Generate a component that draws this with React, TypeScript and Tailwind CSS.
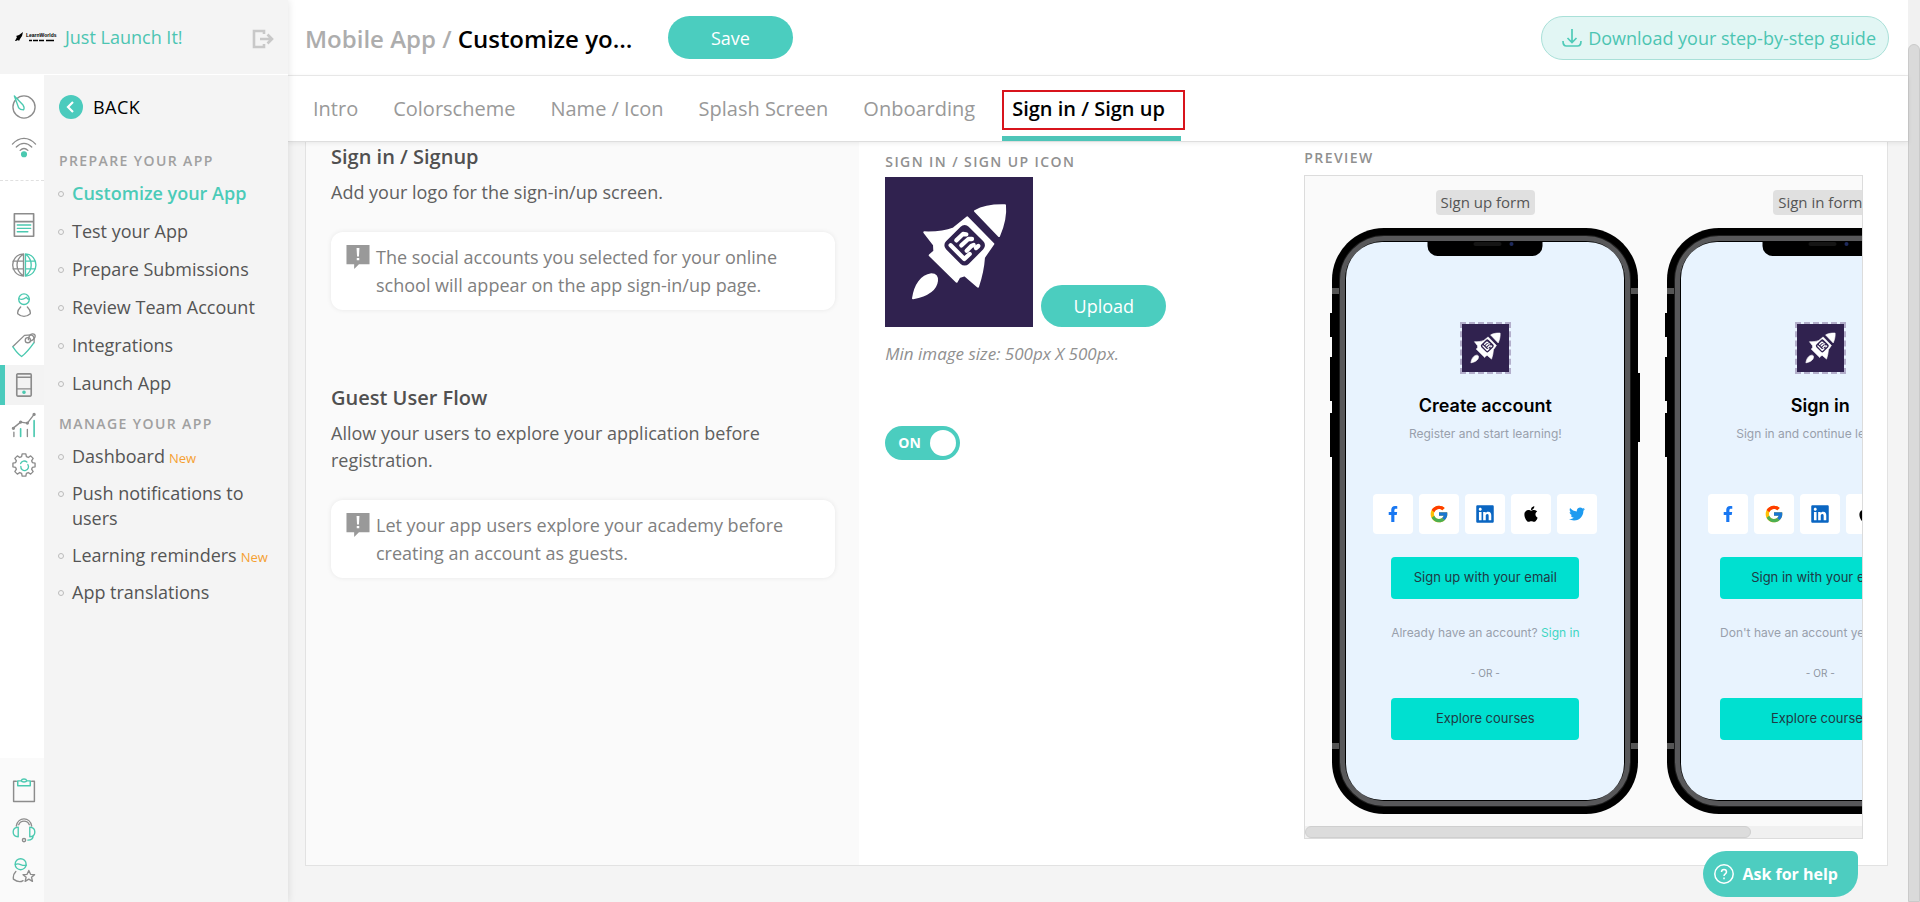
import React, { useState } from 'react';
import { FaApple, FaFacebookF, FaLinkedin, FaTwitter } from 'react-icons/fa';
import { FcGoogle } from 'react-icons/fc';

const prepareLinks = ['Customize your App', 'Test your App', 'Prepare Submissions', 'Review Team Account', 'Integrations', 'Launch App'];

const manageLinks = [
  { label: 'Dashboard', isNew: true },
  { label: 'Push notifications to users', isNew: false },
  { label: 'Learning reminders', isNew: true },
  { label: 'App translations', isNew: false }
];

const tabs = ['Intro', 'Colorscheme', 'Name / Icon', 'Splash Screen', 'Onboarding', 'Sign in / Sign up'];

const socials = [
  { name: 'Facebook', icon: FaFacebookF, className: 'w-4 h-4 text-[#1877f2]' },
  { name: 'Google', icon: FcGoogle, className: 'w-5 h-5' },
  { name: 'LinkedIn', icon: FaLinkedin, className: 'w-5 h-5 text-[#0a66c2]' },
  { name: 'Apple', icon: FaApple, className: 'w-[18px] h-[18px] text-black' },
  { name: 'Twitter', icon: FaTwitter, className: 'w-4 h-4 text-[#1d9bf0]' }
];

const G = '#8c8c8c';
const T = '#4bc9b0';

const railIcons = [
  {
    name: 'Get started',
    art: (
      <>
        <circle cx="12.5" cy="12.5" r="11.5" stroke={G} />
        <path d="M2.500 1l9 9.500c1 1.500 1.500 3.500.5 5-2.500 0-4-.5-5-2z" stroke={T} fill="#fff" />
      </>
    )
  },
  {
    name: 'Feed',
    art: (
      <>
        <path d="M.5 9.500c7-8 17-8 24 0M4.500 12.500c5-5 11-5 16 0M8.500 16c2.500-2.500 5.500-2.500 8 0" stroke={G} />
        <circle cx="12.500" cy="20" r="2.500" fill={T} stroke={T} />
      </>
    )
  },
  {
    name: 'Website',
    art: (
      <>
        <path d="M2.500.8h20v23.400h-20zM2.500 9h20" stroke={G} strokeWidth="1.700" />
        <path d="M5.500 12.500h14M5.500 16h14M5.500 19.500h11" stroke={T} />
      </>
    )
  },
  {
    name: 'Courses',
    art: (
      <>
        <path d="M12 1v23M12 1C-3 2-3 23 12 24M12 1C3 7 3 18 12 24M1 8.500h11M1 16.500h11" stroke={G} />
        <path d="M14 1v23M14 1c14.500 1 14.500 22 0 23M14 1c8 6 8 17 0 23M14 8.500h10M14 16.500h10" stroke={T} />
      </>
    )
  },
  {
    name: 'Users',
    art: (
      <>
        <circle cx="12.500" cy="6.500" r="5.500" stroke={T} />
        <path d="M7.500 6c4 2 6-.5 7.500-1.500 1 1.500 2 2 3 2" stroke={T} />
        <path d="M9 14.500c-2 2-3.500 4.500-3 7 4 3.500 9 3.500 13 0 .5-2.500-1-5-3-7" stroke={G} />
      </>
    )
  },
  {
    name: 'Sales',
    art: (
      <>
        <path d="M1 14L13 2.500 20 2c2.500.5 3.500 3 3 8" stroke={G} />
        <circle cx="16.500" cy="7.500" r="2.700" stroke={G} />
        <path d="M17 7c1-8 8-7 7-3-1 3-3 4-5 4.500" stroke={G} />
        <path d="M1 14.500c3 4.500 6 8 9 10 5-4 9-9 12.500-14" stroke={T} />
      </>
    )
  },
  {
    name: 'Mobile app',
    art: (
      <>
        <rect x="5" y="1" width="15" height="23" rx="1" stroke={G} strokeWidth="1.700" />
        <path d="M5 4.500h15M5 16.500h15" stroke={G} />
        <circle cx="12.500" cy="20" r="1.200" fill={T} stroke={T} />
      </>
    )
  },
  {
    name: 'Reports',
    art: (
      <>
        <path d="M1 16l8-6.500 7 1L23 1.500M2 20v4.500M16 17v7.500" stroke={G} />
        <path d="M9 16.500v8M23 8v16.500" stroke={T} strokeWidth="1.700" />
        <g fill={G} stroke={G}>
          <circle cx="1.500" cy="16" r="1" />
          <circle cx="9" cy="9.500" r="1" />
          <circle cx="16" cy="10.500" r="1" />
          <circle cx="23" cy="1.500" r="1" />
        </g>
      </>
    )
  },
  {
    name: 'Settings',
    art: (
      <>
        <path
          d="M10.600 1h3.800l.6 2.900 1.900.8L19.400 3l2.600 2.600-1.600 2.500.8 1.900 2.800.6v3.800l-2.800.6-.8 1.900 1.600 2.500-2.600 2.600-2.500-1.700-1.900.8-.6 2.900h-3.800l-.6-2.900-1.900-.8L5.600 22 3 19.400l1.600-2.500-.8-1.900-2.800-.6v-3.800l2.800-.6.8-1.900L3 5.600 5.600 3l2.500 1.700 1.900-.8z"
          stroke={G}
        />
        <path d="M9 11a4 4 0 0 1 6.500-1.500M16.500 12a4 4 0 1 1-7.300 2" stroke={T} />
      </>
    )
  }
];

const footerIcons = [
  {
    name: 'Tasks',
    art: (
      <>
        <path d="M4.500 3.500H1.700v21h21.600v-21h-2.800" stroke={G} strokeWidth="1.500" />
        <path d="M6 3h3.500c1-2.500 5-2.500 6 0H19v5H6zM9.500 3c1 1.500 5 1.500 6 0" stroke={T} strokeWidth="1.500" />
      </>
    )
  },
  {
    name: 'Support',
    art: (
      <>
        <path d="M4.500 8.500C6-1.500 19-1.500 20.500 8.500M7 7c2-5 9-5 11 0" stroke={G} />
        <path d="M6.500 9.500v10C-.5 19-.5 10 6.500 9.500zM18.500 9.500v10c7-.5 7-9.500 0-10zM22 18.500c0 3-2 4.500-5.500 4.500" stroke={T} />
        <circle cx="12.500" cy="23" r="1.700" stroke={G} />
      </>
    )
  },
  {
    name: 'Experts',
    art: (
      <>
        <circle cx="9" cy="6.500" r="5.700" stroke={T} />
        <path d="M3.500 7c4-3 6 2 11.500.5" stroke={T} />
        <path d="M4 14c-2 2-3 4.500-2.500 8 4 3 7 3.500 10 1.500" stroke={G} />
        <path d="M17.500 13l1.800 4 4.200.3-3.200 2.700 1 4.300-3.800-2.300-3.800 2.300 1-4.300-3.200-2.700 4.200-.3z" stroke={G} />
      </>
    )
  }
];

function RocketLogo({ className }: { className: string }) {
  return (
    <svg viewBox="0 0 444 450" preserveAspectRatio="none" className={className} role="img" aria-label="School logo">
      <rect width="444" height="450" fill="#30224f" />
      <g fill="#fff" stroke="#fff" strokeWidth="6" strokeLinejoin="round">
        <path d="M270 102c25-14 55-18 90-17 3 30-5 62-18 92z" />
        <path d="M247 121l78 80-28 40c-2 30-8 58-18 88l-40-34-16 5-8 14-81-79 14-12-1-19-29-38c30 1 60-1 88-12z" />
        <path d="M84 364c6-40 25-68 55-72 14 0 18 8 17 20-3 26-30 44-72 52z" />
      </g>
      <rect x="191" y="157" width="96" height="96" rx="17" transform="rotate(45 239 205)" fill="#30224f" />
      <g stroke="#fff" strokeWidth="13" strokeLinecap="round" strokeLinejoin="round" fill="none">
        <path d="M197 205l41 41 16-15" />
        <path d="M214 190l20-19 10 1" />
        <path d="M229 205l21-19 11 0" />
        <path d="M245 221l14-14 7-3" />
        <path d="M273 213l7-6" />
      </g>
    </svg>
  );
}

function RailButton({ name, art, active }: { name: string; art: React.ReactNode; active?: boolean }) {
  return (
    <button
      type="button"
      aria-label={name}
      className={
        active
          ? 'flex h-10 w-11 items-center justify-center border-l-[5px] border-[#4bcbbd] bg-[#f3f3f3] pr-[1px]'
          : 'flex h-10 w-11 items-center justify-center pl-1'
      }
    >
      <svg viewBox="-1 -1 27 27" className="h-[26px] w-[26px]" fill="none" strokeWidth="1.400" strokeLinecap="round" strokeLinejoin="round">
        {art}
      </svg>
    </button>
  );
}

function Note({ children }: { children: React.ReactNode }) {
  return (
    <div className="flex gap-[6px] rounded-xl bg-white py-[11px] pr-8 pl-[15px] shadow-[0_0_5px_rgba(0,0,0,0.08)]">
      <svg viewBox="0 0 24 25" className="mt-0.5 h-6 w-6 shrink-0" aria-hidden="true">
        <path d="M0 0h24v20H13l-5 5v-5H0z" fill="#999" />
        <path d="M10.500 3h3l-.5 9h-2zM10.700 13.500h2.600V16h-2.600z" fill="#fff" />
      </svg>
      <p className="text-lg leading-7 text-[#808080]">{children}</p>
    </div>
  );
}

interface PhoneProps {
  badge: string;
  title: string;
  subtitle: string;
  action: string;
  question: string;
  link: string;
}

function Phone({ badge, title, subtitle, action, question, link }: PhoneProps) {
  return (
    <div className="flex shrink-0 flex-col items-center">
      <span className="mb-[13px] rounded-sm bg-[#e0e0e0] px-[5px] text-[15px] leading-[25px] text-[#555]">{badge}</span>
      <div className="relative h-[586px] w-[306px] rounded-[52px] bg-black p-2">
        {/* side keys and antenna lines */}
        <div className="absolute top-[85px] -left-0.5 h-6 w-2 bg-black" />
        <div className="absolute top-[129px] -left-0.5 h-11 w-2 bg-black" />
        <div className="absolute top-[185px] -left-0.5 h-11 w-2 bg-black" />
        <div className="absolute top-[145px] -right-0.5 h-[69px] w-2 bg-black" />
        <div className="absolute inset-x-0 top-[60px] h-[6px] bg-[#555]" />
        <div className="absolute inset-x-0 bottom-[65px] h-[6px] bg-[#555]" />
        <div className="relative h-full rounded-[44px] border-[5px] border-[#58585a] bg-black p-[1px] shadow-[0_0_0_1px_#1c1c1c]">
          <div className="relative flex h-full flex-col items-center overflow-hidden rounded-[36px] bg-[#e8f3fe] pt-20 font-['Inter',sans-serif]">
            <div className="absolute top-0 left-1/2 flex h-[14px] w-[115px] -translate-x-1/2 items-start justify-center gap-2 rounded-b-[10px] bg-black">
              <span className="ml-4 h-1 w-7 rounded-full bg-[#151515]" />
              <span className="h-1 w-1 rounded-full bg-[#1e2a5c]" />
            </div>
            <div className="border-2 border-dashed border-[#b3aecb]">
              <RocketLogo className="h-12 w-[47px]" />
            </div>
            <h3 className="mt-5 text-lg leading-6 font-semibold text-black">{title}</h3>
            <p className="mt-2 text-xs leading-4 text-[#98a0ac]">{subtitle}</p>
            <div className="mt-[52px] flex gap-1.5">
              {socials.map(social => (
                <button key={social.name} type="button" aria-label={social.name} className="flex h-10 w-10 items-center justify-center rounded-sm bg-white">
                  <social.icon className={social.className} />
                </button>
              ))}
            </div>
            <div className="mt-[23px] flex flex-col text-center">
              <button type="button" className="h-[42px] rounded bg-[#00e0d0] text-[13px] text-[#1f3a44]">{action}</button>
              <p className="mt-[26px] text-xs leading-4 text-[#98a0ac]">
                {question} <a href="#auth" className="text-[#3fd6c2]">{link}</a>
              </p>
              <p className="mt-6 text-[10px] leading-4 text-[#8d95a1]">- OR -</p>
              <button type="button" className="mt-[17px] h-[42px] rounded bg-[#00e0d0] text-[13px] text-[#1f3a44]">Explore courses</button>
            </div>
          </div>
        </div>
      </div>
    </div>
  );
}

export default function App() {
  const [guestFlow, setGuestFlow] = useState(true);

  return (
    <div className="flex h-screen overflow-hidden bg-[#f4f4f4] font-['Open_Sans','Noto_Sans',sans-serif]">
      {/* Sidebar */}
      <aside className="z-10 flex w-72 shrink-0 flex-col bg-[#f4f4f4] shadow-[0_0_8px_rgba(0,0,0,0.12)]">
        <div className="flex h-[75px] items-center border-b border-white pr-[14px] pl-[15px]">
          <svg viewBox="0 0 46 12" className="mr-1 h-3 w-[46px]" aria-hidden="true">
            <path d="M0 10l2-4-1-1 3-1 4-3-1 4-2 3-1 2-1-1-2 1z" fill="#000" />
            <text x="11" y="6" fontSize="5" fontWeight="700" fontFamily="Liberation Sans, sans-serif" fill="#000">LearnWorlds</text>
            <path d="M14 9.500h3m1 0h5m1 0h5m2 0h8" stroke="#000" strokeWidth="1.500" />
          </svg>
          <a href="#school" className="text-lg text-[#4cc5b2]">Just Launch It!</a>
          <button type="button" aria-label="Log out" className="ml-auto pt-1">
            <svg viewBox="0 0 22 20" className="h-5 w-[22px]" fill="none" stroke="#c8c8c8" strokeWidth="2.600">
              <path d="M12 5V2H2v16h10v-3M8 10h12M15.500 5.500L20 10l-4.500 4.500" />
            </svg>
          </button>
        </div>
        <div className="flex min-h-0 flex-1">
          <nav aria-label="Main" className="flex w-11 shrink-0 flex-col bg-white pt-3">
            {railIcons.slice(0, 2).map(icon => (
              <RailButton key={icon.name} {...icon} />
            ))}
            <hr className="mt-[13px] mb-6 border-dashed border-[#e0e0e0]" />
            {railIcons.slice(2).map(icon => (
              <RailButton key={icon.name} {...icon} active={icon.name === 'Mobile app'} />
            ))}
            <div className="mt-auto bg-[#fafafa] py-3">
              {footerIcons.map(icon => (
                <RailButton key={icon.name} {...icon} />
              ))}
            </div>
          </nav>
          <nav aria-label="Mobile app" className="min-w-0 flex-1 pt-[19px] pr-4 pl-[15px]">
            <a href="#back" className="flex items-center gap-2.5 text-lg leading-[26px] font-medium tracking-wide text-black">
              <svg viewBox="0 0 24 24" className="h-6 w-6" aria-hidden="true">
                <circle cx="12" cy="12" r="12" fill="#4bcbbd" />
                <path d="M14 7l-5 5 5 5" fill="none" stroke="#fff" strokeWidth="2.200" />
              </svg>
              BACK
            </a>
            <h2 className="mt-[31px] text-sm leading-5 font-semibold tracking-widest text-[#a0a0a0] uppercase">Prepare your app</h2>
            <ul className="mt-[10px] space-y-[13px]">
              {prepareLinks.map((label, index) => (
                <li key={label} className="flex gap-2">
                  <span className="mt-2.5 -ml-[1px] h-[6px] w-[6px] shrink-0 rounded-full border border-[#bbb]" />
                  <a href="#page" className={index === 0 ? 'text-lg leading-[25px] font-semibold text-[#4bcbb8]' : 'text-lg leading-[25px] font-medium text-[#555]'}>
                    {label}
                  </a>
                </li>
              ))}
            </ul>
            <h2 className="mt-[18px] text-sm leading-5 font-semibold tracking-widest text-[#a0a0a0] uppercase">Manage your app</h2>
            <ul className="mt-[10px] space-y-3">
              {manageLinks.map(item => (
                <li key={item.label} className="flex gap-2">
                  <span className="mt-2.5 -ml-[1px] h-[6px] w-[6px] shrink-0 rounded-full border border-[#bbb]" />
                  <a href="#page" className="text-lg leading-[25px] font-medium text-[#555]">
                    {item.label}
                    {item.isNew && <span className="ml-1 text-[13px] leading-none font-normal text-[#f5a032]">New</span>}
                  </a>
                </li>
              ))}
            </ul>
          </nav>
        </div>
      </aside>

      <main className="flex min-w-0 flex-1 flex-col">
        <header className="flex h-[76px] shrink-0 items-center border-b border-[#ececec] bg-white pr-[19px] pl-[17px]">
          <h1 className="w-[332px] truncate pt-0.5 text-2xl font-semibold text-black">
            <span className="text-[#adadad]">Mobile App / </span>
            Customize your App
          </h1>
          <button type="button" className="ml-[31px] h-[43px] w-[125px] rounded-full bg-[#4bcdbf] text-lg text-white">Save</button>
          <button type="button" className="ml-auto flex h-11 items-center gap-1.5 rounded-full border border-[#a9e0d8] bg-[#e2f6f4] pr-3 pl-5 text-lg text-[#4cc5b2]">
            <svg viewBox="0 0 20 20" className="h-5 w-5" fill="none" stroke="#4fcbb8" strokeWidth="1.700">
              <path d="M10 1v13M5.500 10l4.500 4.500 4.500-4.500M1 13c0 3.500 1 5 3.500 5h11c2.500 0 3.500-1.500 3.500-5" />
            </svg>
            Download your step-by-step guide
          </button>
        </header>
        <nav aria-label="App settings" className="z-[5] flex h-[66px] shrink-0 items-stretch gap-[19px] border-b border-[#dedede] bg-white pl-[17px] shadow-[0_1px_5px_rgba(0,0,0,0.08)]">
          {tabs.map(tab => (
            <a
              key={tab}
              href="#tab"
              className={
                tab === 'Sign in / Sign up'
                  ? 'relative flex items-center border-b-[5px] border-[#4dc5b8] pt-1.5 pr-4 pl-2.5 text-xl font-semibold text-black'
                  : 'flex items-center border-b-[5px] border-transparent px-2 pt-1.5 text-xl text-[#999]'
              }
            >
              {tab}
              {tab === 'Sign in / Sign up' && <span className="absolute top-3.5 -right-1 left-0 h-10 border-2 border-[#d8141c]" />}
            </a>
          ))}
        </nav>

        {/* Settings card */}
        <div className="flex min-h-0 flex-1 pr-5 pb-9 pl-[17px]">
          <section className="flex flex-1 border border-t-0 border-[#e2e2e2] bg-white">
            <div className="w-[35%] shrink-0 bg-[#fafafa] pt-[3px] pr-6 pl-[25px]">
              <div className="h-[241px]">
                <h2 className="text-xl leading-6 font-semibold text-[#505050]">Sign in / Signup</h2>
                <p className="mt-2.5 mb-[26px] text-lg leading-[27px] text-[#606060]">Add your logo for the sign-in/up screen.</p>
                <Note>The social accounts you selected for your online school will appear on the app sign-in/up page.</Note>
              </div>
              <h2 className="text-xl leading-6 font-semibold text-[#505050]">Guest User Flow</h2>
              <p className="mt-2.5 mb-[26px] text-lg leading-[27px] text-[#606060]">Allow your users to explore your application before registration.</p>
              <Note>Let your app users explore your academy before creating an account as guests.</Note>
            </div>
            <div className="grid min-w-0 flex-1 grid-cols-7 pr-6 pl-[26px]">
              <div className="col-span-3 pt-2.5">
                <h3 className="text-sm leading-5 font-semibold tracking-widest text-[#909090] uppercase">Sign in / Sign up icon</h3>
                <div className="mt-[5px] flex items-end gap-2">
                  <RocketLogo className="h-[150px] w-[148px]" />
                  <button type="button" className="h-[42px] w-[125px] rounded-full bg-[#4bcdbf] text-lg text-white">Upload</button>
                </div>
                <p className="mt-[15px] text-[17px] leading-6 text-[#909090] italic">Min image size: 500px X 500px.</p>
                <label className="mt-[60px] flex h-[34px] w-[75px] cursor-pointer items-center justify-between rounded-full bg-[#4bcdbf] pr-1 pl-[13px]">
                  <span className="text-sm font-bold text-white">{guestFlow ? 'ON' : 'OFF'}</span>
                  <input
                    type="checkbox"
                    aria-label="Guest user flow"
                    checked={guestFlow}
                    onChange={e => setGuestFlow(e.target.checked)}
                    className="h-[26px] w-[26px] appearance-none rounded-full bg-white"
                  />
                </label>
              </div>
              <div className="col-span-4 min-w-0 pt-1.5">
                <h3 className="text-sm leading-5 font-semibold tracking-widest text-[#909090] uppercase">Preview</h3>
                <div className="mt-[7px] overflow-hidden border border-[#dcdcdc] bg-[#fafafa]">
                  <div className="flex gap-[29px] pt-[14px] pb-3 pl-[27px]">
                    <Phone
                      badge="Sign up form"
                      title="Create account"
                      subtitle="Register and start learning!"
                      action="Sign up with your email"
                      question="Already have an account?"
                      link="Sign in"
                    />
                    <Phone
                      badge="Sign in form"
                      title="Sign in"
                      subtitle="Sign in and continue learning!"
                      action="Sign in with your email"
                      question="Don't have an account yet?"
                      link="Sign up"
                    />
                  </div>
                  <div className="h-3 bg-[#f0f0f0]">
                    <div className="h-3 w-4/5 rounded-full border border-[#cfcfcf] bg-[#dcdcdc]" />
                  </div>
                </div>
              </div>
            </div>
          </section>
        </div>
      </main>

      {/* Page scrollbar */}
      <div className="w-3 shrink-0 bg-[#f1f1f1] pt-11">
        <div className="h-full rounded-t-md border border-[#cacaca] bg-[#dadada]" />
      </div>

      <button
        type="button"
        className="fixed right-[62px] bottom-[5px] z-20 flex h-[46px] items-center gap-2 rounded-[23px] rounded-tr-md bg-[#4dcdc0] pr-5 pl-[11px] text-base font-bold text-white"
      >
        <svg viewBox="0 0 20 20" className="h-5 w-5" fill="none" stroke="#fff" strokeWidth="1.500">
          <circle cx="10" cy="10" r="9.200" />
          <path d="M7.500 8c0-3.500 5-3.500 5 0 0 2-2.500 1.700-2.500 4M10 13.500v1.700" />
        </svg>
        Ask for help
      </button>
    </div>
  );
}
